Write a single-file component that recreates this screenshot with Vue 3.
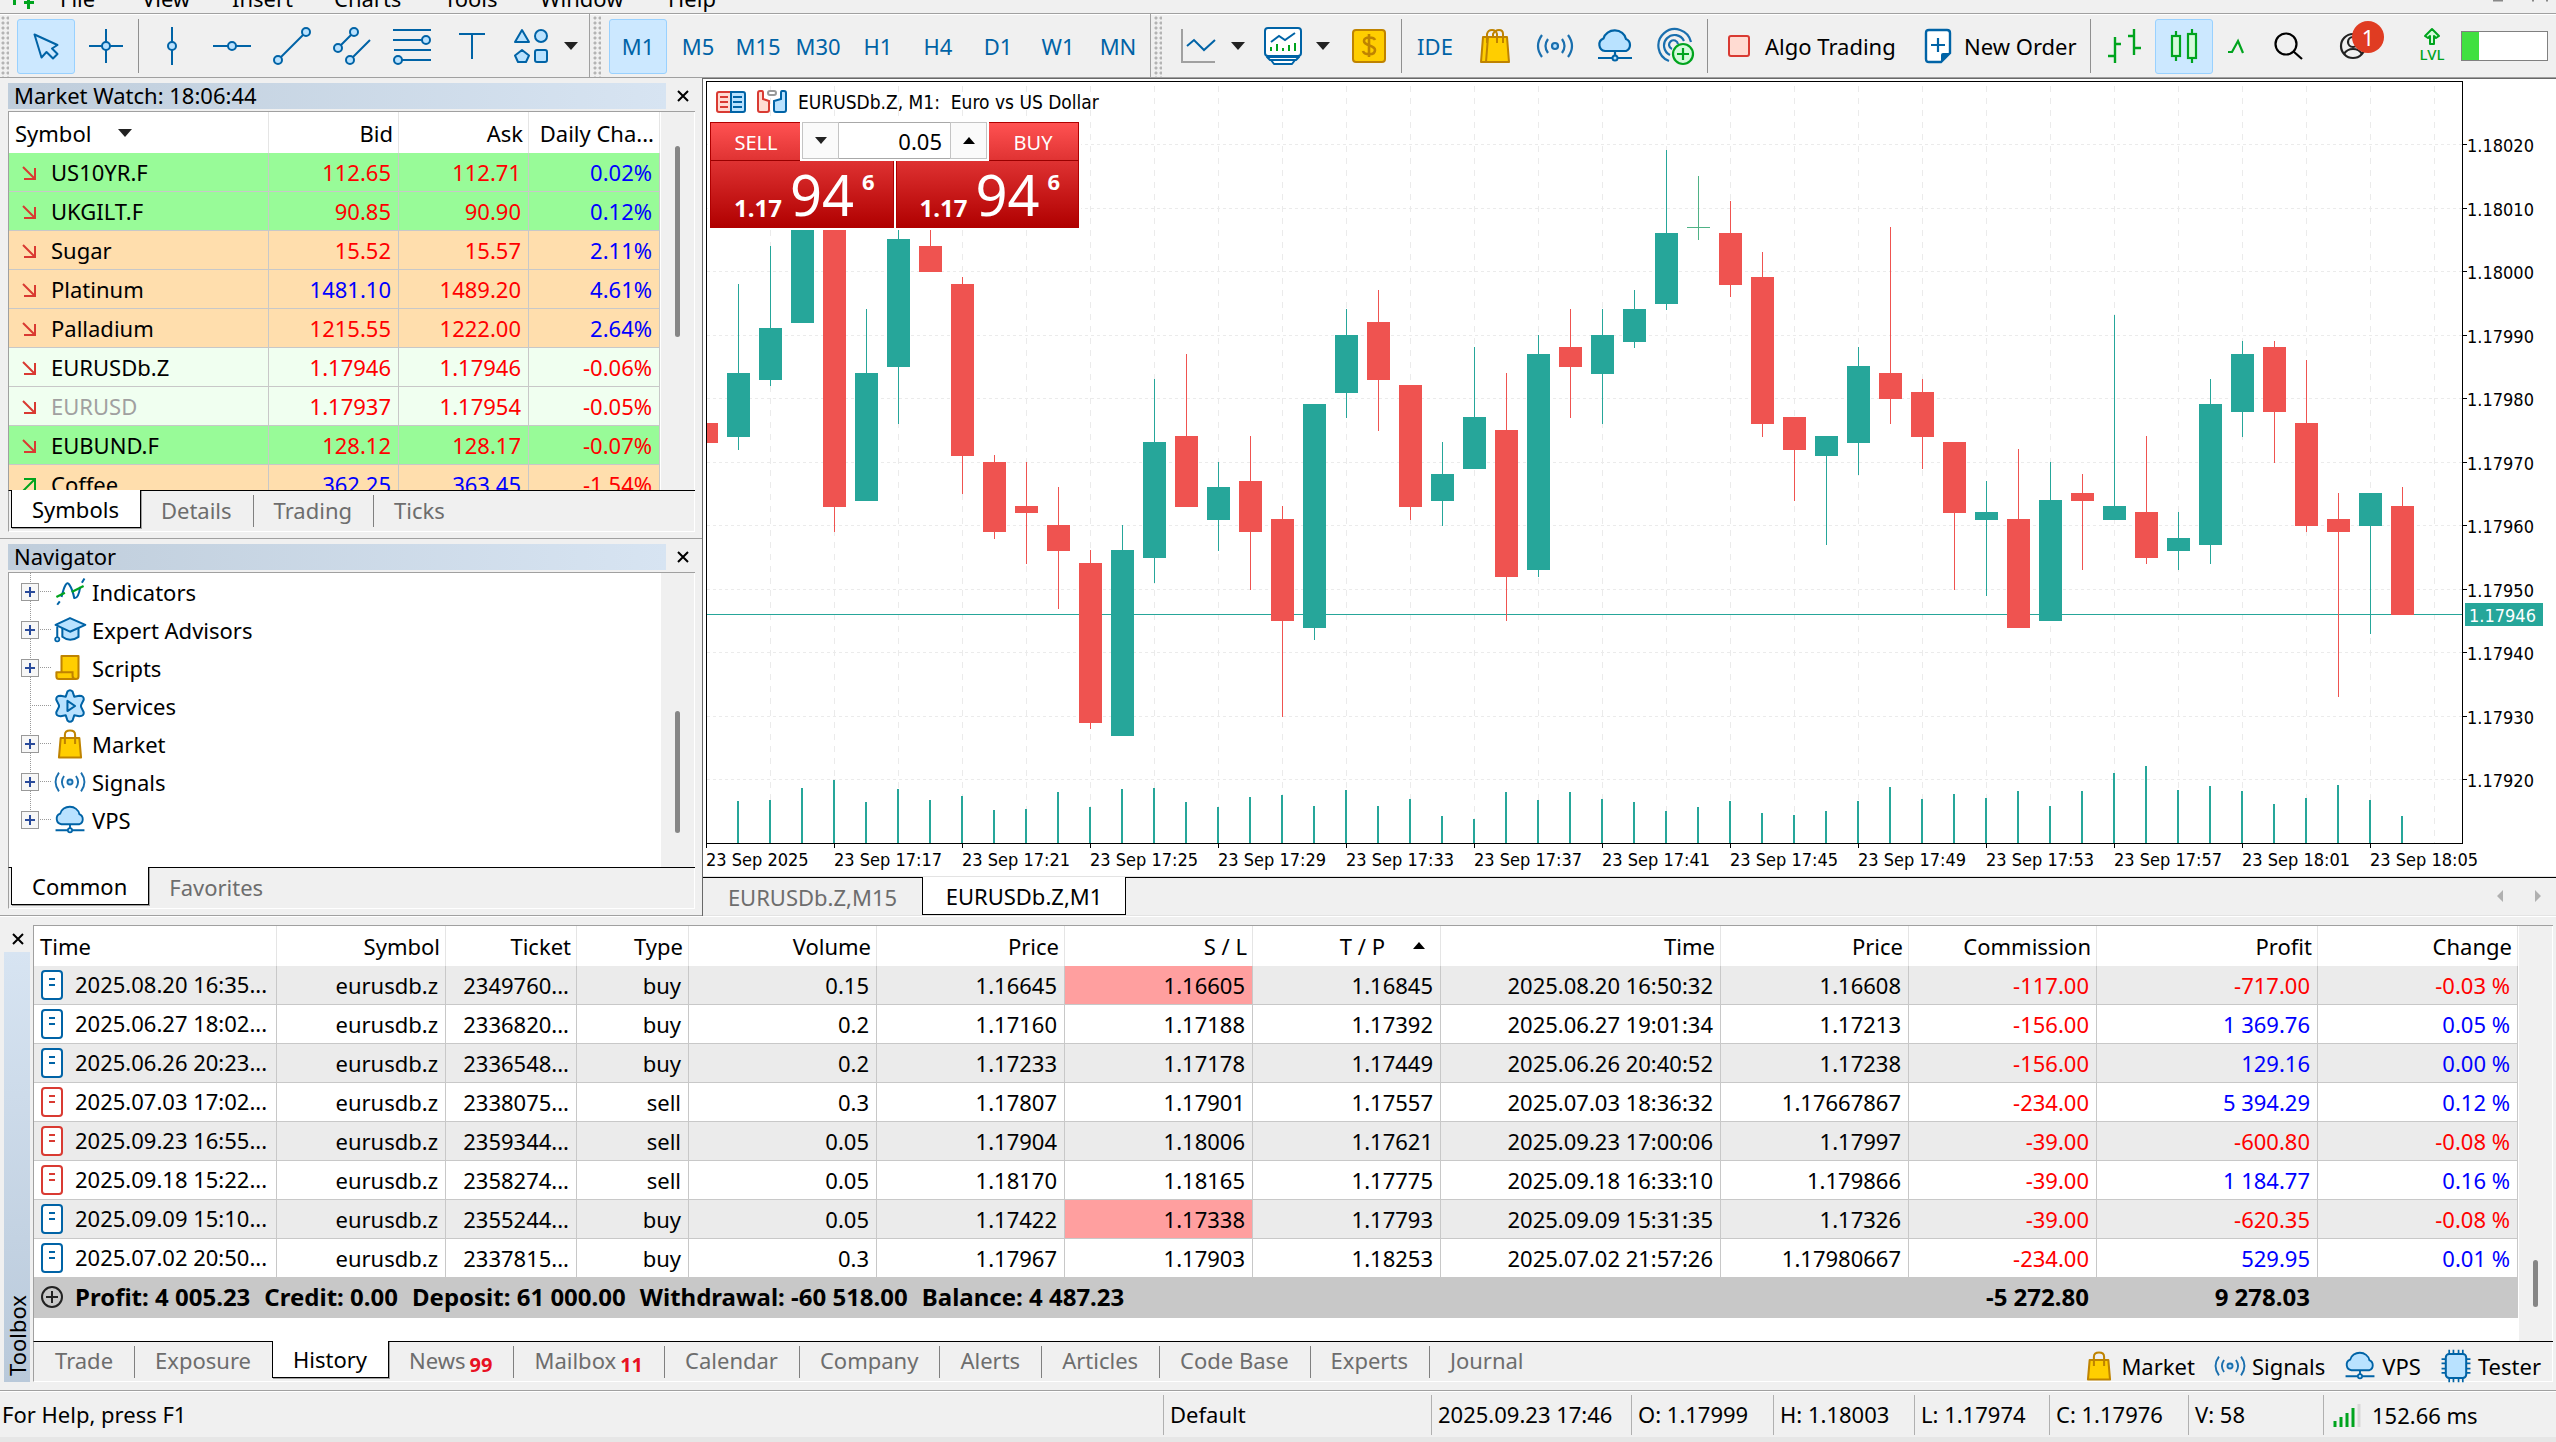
<script setup>
import { ref } from 'vue'

const menu = [
  { label: 'File', w: 82 }, { label: 'View', w: 90 }, { label: 'Insert', w: 102 },
  { label: 'Charts', w: 110 }, { label: 'Tools', w: 96 }, { label: 'Window', w: 128 }, { label: 'Help', w: 80 },
]
const tools = ['cursor', 'cross', '|', 'vline', 'hline', 'trend', 'channel', 'fibo', 'text']
const timeframes = ['M1', 'M5', 'M15', 'M30', 'H1', 'H4', 'D1', 'W1', 'MN']
const lots = ref('0.05')

const quotes = [
  { s: 'US10YR.F', bid: '112.65', ask: '112.71', ch: '0.02%', bg: 'green' },
  { s: 'UKGILT.F', bid: '90.85', ask: '90.90', ch: '0.12%', bg: 'green' },
  { s: 'Sugar', bid: '15.52', ask: '15.57', ch: '2.11%', bg: 'sand' },
  { s: 'Platinum', bid: '1481.10', ask: '1489.20', ch: '4.61%', bg: 'sand', bidUp: true },
  { s: 'Palladium', bid: '1215.55', ask: '1222.00', ch: '2.64%', bg: 'sand' },
  { s: 'EURUSDb.Z', bid: '1.17946', ask: '1.17946', ch: '-0.06%', bg: 'mint' },
  { s: 'EURUSD', bid: '1.17937', ask: '1.17954', ch: '-0.05%', bg: 'mint', dim: true },
  { s: 'EUBUND.F', bid: '128.12', ask: '128.17', ch: '-0.07%', bg: 'green' },
  { s: 'Coffee', bid: '362.25', ask: '363.45', ch: '-1.54%', bg: 'sand', up: true, bidUp: true, askUp: true },
]
const tree = [
  { label: 'Indicators', icon: 'indicators', open: true },
  { label: 'Expert Advisors', icon: 'hat', open: true },
  { label: 'Scripts', icon: 'scroll', open: true },
  { label: 'Services', icon: 'gear', open: false },
  { label: 'Market', icon: 'bag', open: true },
  { label: 'Signals', icon: 'signals', open: true },
  { label: 'VPS', icon: 'cloud', open: true },
]

/* open, close, high, low in points above 1.17900 */
const candles = [
  [76, 73, 76, 73], [74, 84, 98, 72], [83, 91, 104, 82], [92, 110, 112, 92], [110, 63, 111, 59], [64, 84, 94, 64],
  [85, 105, 108, 76], [104, 100, 108, 100], [98, 71, 99, 65], [70, 59, 71, 58], [63, 62, 70, 54], [60, 56, 66, 47],
  [54, 29, 56, 28], [27, 56, 60, 27], [55, 73, 83, 51], [74, 63, 87, 63], [61, 66, 70, 56], [67, 59, 74, 50],
  [61, 45, 63, 30], [44, 79, 79, 42], [81, 90, 94, 77], [92, 83, 97, 75], [82, 63, 82, 61], [64, 68, 73, 60],
  [69, 77, 88, 69], [75, 52, 84, 45], [53, 87, 90, 52], [88, 85, 94, 77], [84, 90, 94, 76], [89, 94, 97, 88],
  [95, 106, 119, 94], [107, 107, 115, 105], [106, 98, 111, 96], [99, 76, 103, 74], [77, 72, 77, 64], [71, 74, 74, 57],
  [73, 85, 88, 68], [84, 80, 107, 76], [81, 74, 83, 69], [73, 62, 73, 50], [61, 62, 67, 49], [61, 44, 72, 44],
  [45, 64, 70, 45], [65, 64, 68, 53], [61, 63, 93, 61], [62, 55, 74, 54], [56, 58, 62, 53], [57, 79, 83, 54],
  [78, 87, 89, 74], [88, 78, 89, 70], [76, 60, 86, 59], [61, 59, 65, 33], [60, 65, 65, 43], [63, 46, 66, 46],
]
const volumes = [0, 42, 43, 55, 63, 41, 54, 43, 47, 33, 34, 51, 36, 54, 55, 41, 36, 46, 48, 37, 53, 37, 44, 27, 24, 51, 43, 51,
  44, 41, 32, 36, 42, 30, 28, 32, 42, 56, 44, 49, 45, 52, 37, 52, 70, 77, 53, 57, 52, 39, 45, 58, 43, 27]

const STEP = 32
const BASE = 762
const PLOT_W = 1756
const py = (v) => Math.round(63 + (120 - v) * 6.35)
const bars = candles.map(([o, c, h, l], i) => ({
  x: i * STEP,
  top: py(Math.max(o, c)),
  height: o === c ? 1 : py(Math.min(o, c)) - py(Math.max(o, c)) + 1,
  high: py(h),
  low: py(l) + 1,
  color: o === c ? '#4fb286' : c > o ? '#26a69a' : '#ef5350',
}))
const gridX = Array.from({ length: 27 }, (_, i) => 64 + i * 64)
const prices = Array.from({ length: 11 }, (_, i) => ({ y: py(120 - i * 10), label: (1.1802 - i * 0.0001).toFixed(5) }))
const times = ['2025', '17:17', '17:21', '17:25', '17:29', '17:33', '17:37', '17:41', '17:45', '17:49', '17:53', '17:57', '18:01', '18:05']
  .map((t, i) => ({ x: i * 128, label: '23 Sep ' + t }))

const cols = [
  { t: 'Time', w: 243, left: true }, { t: 'Symbol', w: 169 }, { t: 'Ticket', w: 131 }, { t: 'Type', w: 112 },
  { t: 'Volume', w: 188 }, { t: 'Price', w: 188 }, { t: 'S / L', w: 188 }, { t: 'T / P', w: 188, sort: true },
  { t: 'Time', w: 280 }, { t: 'Price', w: 188 }, { t: 'Commission', w: 188 }, { t: 'Profit', w: 221 }, { t: 'Change', w: 200 },
]
const deals = [
  ['2025.08.20 16:35...', 'eurusdb.z', '2349760...', 'buy', '0.15', '1.16645', '1.16605', '1.16845', '2025.08.20 16:50:32', '1.16608', '-117.00', '-717.00', '-0.03 %'],
  ['2025.06.27 18:02...', 'eurusdb.z', '2336820...', 'buy', '0.2', '1.17160', '1.17188', '1.17392', '2025.06.27 19:01:34', '1.17213', '-156.00', '1 369.76', '0.05 %'],
  ['2025.06.26 20:23...', 'eurusdb.z', '2336548...', 'buy', '0.2', '1.17233', '1.17178', '1.17449', '2025.06.26 20:40:52', '1.17238', '-156.00', '129.16', '0.00 %'],
  ['2025.07.03 17:02...', 'eurusdb.z', '2338075...', 'sell', '0.3', '1.17807', '1.17901', '1.17557', '2025.07.03 18:36:32', '1.17667867', '-234.00', '5 394.29', '0.12 %'],
  ['2025.09.23 16:55...', 'eurusdb.z', '2359344...', 'sell', '0.05', '1.17904', '1.18006', '1.17621', '2025.09.23 17:00:06', '1.17997', '-39.00', '-600.80', '-0.08 %'],
  ['2025.09.18 15:22...', 'eurusdb.z', '2358274...', 'sell', '0.05', '1.18170', '1.18165', '1.17775', '2025.09.18 16:33:10', '1.179866', '-39.00', '1 184.77', '0.16 %'],
  ['2025.09.09 15:10...', 'eurusdb.z', '2355244...', 'buy', '0.05', '1.17422', '1.17338', '1.17793', '2025.09.09 15:31:35', '1.17326', '-39.00', '-620.35', '-0.08 %'],
  ['2025.07.02 20:50...', 'eurusdb.z', '2337815...', 'buy', '0.3', '1.17967', '1.17903', '1.18253', '2025.07.02 21:57:26', '1.17980667', '-234.00', '529.95', '0.01 %'],
]
const stopHit = (r, c) => c === 6 && (r === 0 || r === 6)
const tone = (v, c) => (c < 10 ? '' : v.startsWith('-') ? 'neg' : 'pos')
const totals = ['Profit: 4 005.23', 'Credit: 0.00', 'Deposit: 61 000.00', 'Withdrawal: -60 518.00', 'Balance: 4 487.23']
const boxTabs = [
  { t: 'Trade' }, { t: 'Exposure' }, { t: 'History', on: true }, { t: 'News', n: '99' }, { t: 'Mailbox', n: '11' }, { t: 'Calendar' },
  { t: 'Company' }, { t: 'Alerts' }, { t: 'Articles' }, { t: 'Code Base' }, { t: 'Experts' }, { t: 'Journal' },
]
const links = [{ t: 'Market', i: 'bag' }, { t: 'Signals', i: 'signals' }, { t: 'VPS', i: 'cloud' }, { t: 'Tester', i: 'chip' }]
const status = [
  { t: 'Default', w: 268 }, { t: '2025.09.23 17:46', w: 200 }, { t: 'O: 1.17999', w: 142 }, { t: 'H: 1.18003', w: 141 },
  { t: 'L: 1.17974', w: 135 }, { t: 'C: 1.17976', w: 139 }, { t: 'V: 58', w: 135 },
]
</script>

<template>
  <div class="terminal">
    <svg class="defs" aria-hidden="true">
      <defs>
        <symbol id="cursor" viewBox="0 0 40 40"><path d="M8.5 8.5 15.5 31.5 20.5 26 27 32.5 31.5 28 26 22.5 31.5 19Z" fill="#cce8ff" stroke="#0063a6" stroke-width="2" stroke-linejoin="round" /></symbol>
        <symbol id="cross" viewBox="0 0 40 40"><path d="M20 3V37M3 20H37" stroke="#0063a6" stroke-width="2" /><circle cx="20" cy="20" r="4" fill="#b9e2ff" stroke="#0063a6" stroke-width="2" /></symbol>
        <symbol id="vline" viewBox="0 0 40 40"><path d="M20 1V39" stroke="#0063a6" stroke-width="2" /><circle cx="20" cy="20" r="4" fill="#b9e2ff" stroke="#0063a6" stroke-width="2" /></symbol>
        <symbol id="hline" viewBox="0 0 40 40"><path d="M1 20H39" stroke="#0063a6" stroke-width="2" /><circle cx="20" cy="20" r="4" fill="#b9e2ff" stroke="#0063a6" stroke-width="2" /></symbol>
        <symbol id="trend" viewBox="0 0 40 40"><path d="M6 34 34 6" stroke="#0063a6" stroke-width="2" /><g fill="#b9e2ff" stroke="#0063a6" stroke-width="2"><circle cx="34" cy="6" r="4" /><circle cx="6" cy="34" r="4" /></g></symbol>
        <symbol id="channel" viewBox="0 0 40 40"><path d="M6 22 22 6M18 34 38 14" stroke="#0063a6" stroke-width="2" /><g fill="#b9e2ff" stroke="#0063a6" stroke-width="2"><circle cx="22" cy="6" r="4" /><circle cx="6" cy="22" r="4" /><circle cx="18" cy="34" r="4" /></g></symbol>
        <symbol id="fibo" viewBox="0 0 40 40"><path d="M1 4H39M1 14H32M2 24H39M8 34H39" stroke="#0063a6" stroke-width="2" /><g fill="#b9e2ff" stroke="#0063a6" stroke-width="2"><circle cx="34" cy="14" r="4" /><circle cx="6" cy="34" r="4" /></g></symbol>
        <symbol id="text" viewBox="0 0 40 40"><path d="M7 8H33M20 8V33" stroke="#0063a6" stroke-width="2" /></symbol>
        <symbol id="shapes" viewBox="0 0 40 40"><g fill="#b9e2ff" stroke="#0063a6" stroke-width="2" stroke-linejoin="round"><path d="M11 4 18 16H4Z" /><ellipse cx="30" cy="10" rx="6" ry="6" /><path d="M11 24 18 29.5 15 36H7L4 29.5Z" /><rect x="24" y="24" width="12" height="12" rx="2" /></g></symbol>
        <symbol id="linechart" viewBox="0 0 40 40"><path d="M4 3V36H37" fill="none" stroke="#a0a0a0" stroke-width="2" /><path d="M9 20 16 14 26 24 37 14" fill="none" stroke="#0063a6" stroke-width="2" /></symbol>
        <symbol id="template" viewBox="0 0 40 40"><rect x="2" y="2" width="36" height="28" rx="3" fill="#fff" stroke="#0063a6" stroke-width="2" /><path d="M4 31H36L33 34H7ZM8 34H32L29 38H11Z" fill="#fff" stroke="#0063a6" stroke-width="2" stroke-linejoin="round" /><path d="M8 16 16 10 22 14 32 7" fill="none" stroke="#0063a6" stroke-width="2" /><path d="M8 25V21M14 25V18M20 25V22M26 25V19M32 25V17" stroke="#00a41e" stroke-width="2" /></symbol>
        <symbol id="dollar" viewBox="0 0 40 40"><rect x="4" y="4" width="32" height="32" rx="3" fill="#ffce00" stroke="#bf8300" stroke-width="2" /><path d="M26 14C25 11 15 10 15 15 15 20 26 19 26 24 26 30 15 29 14 25M20 8V31" fill="none" stroke="#bf8300" stroke-width="2.6" /></symbol>
        <symbol id="bag2" viewBox="0 0 40 40"><path d="M8 11H32L34 36H6Z" fill="#ffce00" stroke="#bf8300" stroke-width="2" stroke-linejoin="round" /><path d="M13 11 11 36M12 17V8Q13 4 17 4T22 8V17M18 11V8Q20 4 24 4T28 8V17" fill="none" stroke="#bf8300" stroke-width="2" /></symbol>
        <symbol id="bag" viewBox="0 0 40 40"><path d="M9 13H31L33 36H7Z" fill="#ffce00" stroke="#bf8300" stroke-width="2.4" stroke-linejoin="round" /><path d="M14 20V9Q14 4 20 4T26 9V20" fill="none" stroke="#bf8300" stroke-width="2.4" /></symbol>
        <symbol id="signals" viewBox="0 0 40 40"><g fill="none" stroke="#1a6fae" stroke-width="2.2"><circle cx="20" cy="20" r="3" fill="#b9e2ff" /><path d="M13 13Q8 20 13 27M27 13Q32 20 27 27M7 9Q-1 20 7 31M33 9Q41 20 33 31" /></g></symbol>
        <symbol id="cloud" viewBox="0 0 40 40"><path d="M10 25A6.500 6.500 0 0 1 8.500 12.500 11.500 10.500 0 0 1 31 13 6.500 6.500 0 0 1 31 25Z" fill="#b9e2ff" stroke="#0063a6" stroke-width="2.2" /><path d="M20 26V30M3 32H37" stroke="#0063a6" stroke-width="2.2" /><circle cx="20" cy="32" r="2.5" fill="#b9e2ff" stroke="#0063a6" stroke-width="2" /></symbol>
        <symbol id="radar" viewBox="0 0 40 40"><g fill="none" stroke="#1a6fae" stroke-width="2.2"><path d="M14 35A16.500 16.500 0 1 1 36 16M15 29A10.500 10.500 0 1 1 29 15M17 23A4.500 4.500 0 1 1 23 18" /></g><circle cx="28" cy="28" r="10" fill="#d4fadb" stroke="#00a41e" stroke-width="2.2" /><path d="M28 22V34M22 28H34" stroke="#00a41e" stroke-width="2.2" /></symbol>
        <symbol id="order" viewBox="0 0 28 36"><path d="M5 2H23Q26 2 26 5V25L17 34H5Q2 34 2 31V5Q2 2 5 2Z" fill="#fff" stroke="#0063a6" stroke-width="2.4" /><path d="M17 34V27Q17 25 19 25H26Z" fill="#0063a6" /><path d="M14 10V24M7 17H21" stroke="#0063a6" stroke-width="2.2" /></symbol>
        <symbol id="barchart" viewBox="0 0 40 40"><path d="M11 11V37M4 30H11M11 18H17M30 3V29M24 10H30M30 22H37" fill="none" stroke="#00a41e" stroke-width="2.4" /></symbol>
        <symbol id="candlechart" viewBox="0 0 40 40"><path d="M12 5V35M28 3V37" stroke="#00a41e" stroke-width="2.2" /><g fill="#d4fadb" stroke="#00a41e" stroke-width="2.2"><rect x="8" y="10" width="8" height="20" /><rect x="24" y="8" width="8" height="24" /></g></symbol>
        <symbol id="peak" viewBox="0 0 20 40"><path d="M2 26H6L12 15 17 27" fill="none" stroke="#00a41e" stroke-width="2.2" /></symbol>
        <symbol id="search" viewBox="0 0 40 40"><circle cx="18" cy="18" r="10.5" fill="none" stroke="#000" stroke-width="2.2" /><path d="M25.5 25.5 34 33" stroke="#000" stroke-width="2.2" /></symbol>
        <symbol id="account" viewBox="0 0 40 40"><g fill="none" stroke="#222" stroke-width="2.2"><circle cx="20" cy="20" r="12" /><circle cx="20" cy="16" r="5" /><path d="M11 28Q14 23 20 23T29 28" /></g></symbol>
        <symbol id="lvlup" viewBox="0 0 20 20"><path d="M10 2 17 9 14 11 12 9V17H8V9L6 11 3 9Z" fill="#d4fadb" stroke="#00a41e" stroke-width="2" stroke-linejoin="round" /></symbol>
        <symbol id="indicators" viewBox="0 0 40 40"><path d="M5 35 8 31M10 26Q15 5 19 11T25 27Q30 28 32 14M34 9 37 4" fill="none" stroke="#0063a6" stroke-width="2.4" /><path d="M4 26 14 21M22 20 36 13" stroke="#00a41e" stroke-width="2.6" /></symbol>
        <symbol id="hat" viewBox="0 0 40 40"><path d="M11 16V28Q20 35 30 28V16" fill="#b9e2ff" stroke="#0063a6" stroke-width="2.4" /><path d="M20 6 38 14 20 22 3 14Z" fill="#b9e2ff" stroke="#0063a6" stroke-width="2.4" stroke-linejoin="round" /><path d="M5 16V29" stroke="#0063a6" stroke-width="2.4" /><circle cx="5" cy="31" r="2.5" fill="#b9e2ff" stroke="#0063a6" stroke-width="2" /></symbol>
        <symbol id="scroll" viewBox="0 0 40 40"><path d="M10 6H30V30Q30 33 27 33H7Q4 33 4 30V25H10Z" fill="#ffce00" stroke="#bf8300" stroke-width="2.4" stroke-linejoin="round" /><path d="M10 25H23V29Q23 33 27 33" fill="none" stroke="#bf8300" stroke-width="2.4" /></symbol>
        <symbol id="gear" viewBox="0 0 40 40"><path d="M17 3Q20 0 23 3L25 9 31 8Q37 8 36 13L33 19V21L36 27Q37 32 31 32L25 31 23 37Q20 40 17 37L15 31 9 32Q3 32 4 27L7 21V19L4 13Q3 8 9 8L15 9Z" fill="#b9e2ff" stroke="#0063a6" stroke-width="2.4" stroke-linejoin="round" /><path d="M17 14V26L26 20Z" fill="none" stroke="#0063a6" stroke-width="2.4" stroke-linejoin="round" /></symbol>
        <symbol id="chip" viewBox="0 0 40 40"><path d="M12 1V39M17 1V39M23 1V39M28 1V39M3 12H37M3 17H37M3 23H37M3 28H37" stroke="#0063a6" stroke-width="2" /><rect x="8" y="6" width="24" height="28" rx="4" fill="#b9e2ff" stroke="#0063a6" stroke-width="2.4" /></symbol>
      </defs>
    </svg>

    <nav class="menubar">
      <svg class="logo" width="40" height="13" viewBox="0 0 40 13"><path d="M14.5 0V5M28.5 0V9M24 2.500H34" stroke="#00a41e" stroke-width="3" /></svg>
      <button v-for="m in menu" :key="m.label" class="menu-item" :style="{ width: m.w + 'px' }">{{ m.label }}</button>
      <svg class="wincontrols" width="64" height="4" viewBox="0 0 64 4"><path d="M1 0H11M40 0H42M54 0H56" stroke="#888" stroke-width="3" /></svg>
    </nav>

    <header class="toolbar">
      <div class="group">
        <i class="grip"></i>
        <template v-for="(t, i) in tools" :key="i">
          <i v-if="t === '|'" class="sep"></i>
          <button v-else class="tb" :class="{ on: t === 'cursor' }" :aria-label="t"><svg class="ic"><use :href="'#' + t" /></svg></button>
        </template>
        <button class="tb drop" aria-label="shapes"><svg class="ic"><use href="#shapes" /></svg><i class="down"></i></button>
      </div>
      <div class="group">
        <i class="grip"></i>
        <button v-for="t in timeframes" :key="t" class="tb blue" :class="{ on: t === 'M1' }">{{ t }}</button>
      </div>
      <div class="group wide">
        <i class="grip"></i>
        <button class="tb drop" aria-label="chart type"><svg class="ic"><use href="#linechart" /></svg><i class="down"></i></button>
        <button class="tb drop" aria-label="templates"><svg class="ic"><use href="#template" /></svg><i class="down"></i></button>
        <button class="tb" aria-label="trading"><svg class="ic"><use href="#dollar" /></svg></button>
        <i class="sep"></i>
        <button class="tb blue">IDE</button>
        <button class="tb" aria-label="market"><svg class="ic"><use href="#bag2" /></svg></button>
        <button class="tb" aria-label="signals"><svg class="ic"><use href="#signals" /></svg></button>
        <button class="tb" aria-label="vps"><svg class="ic"><use href="#cloud" /></svg></button>
        <button class="tb" aria-label="add signal"><svg class="ic"><use href="#radar" /></svg></button>
        <i class="sep"></i>
        <button class="tb algo"><i class="stop"></i>Algo Trading</button>
        <button class="tb order"><svg width="28" height="36"><use href="#order" /></svg>New Order</button>
        <i class="sep"></i>
        <button class="tb" aria-label="bars"><svg class="ic"><use href="#barchart" /></svg></button>
        <button class="tb on" aria-label="candles"><svg class="ic"><use href="#candlechart" /></svg></button>
        <button class="tb slim" aria-label="line"><svg width="20" height="40"><use href="#peak" /></svg></button>
        <div class="right">
          <button class="tb" aria-label="search"><svg class="ic"><use href="#search" /></svg></button>
          <button class="tb account" aria-label="account"><svg class="ic"><use href="#account" /></svg><span class="badge">1</span></button>
          <div class="lvl"><svg width="20" height="20"><use href="#lvlup" /></svg><span>LVL</span></div>
          <div class="battery"><i></i></div>
        </div>
      </div>
    </header>

    <main class="middle">
      <aside class="left">
        <section class="dock watch">
          <div class="dock-title"><h2>Market Watch: 18:06:44</h2><button class="close" aria-label="close"><svg width="12" height="12"><path d="M1 1 11 11M11 1 1 11" stroke="#000" stroke-width="2" /></svg></button></div>
          <div class="dock-body">
            <table class="quotes">
              <thead><tr><th class="sym">Symbol<i class="down"></i></th><th>Bid</th><th>Ask</th><th class="chg">Daily Cha...</th></tr></thead>
              <tbody>
                <tr v-for="q in quotes" :key="q.s" :class="q.bg">
                  <td class="sym" :class="{ dim: q.dim }">
                    <svg class="arrow" width="16" height="16"><path v-if="q.up" d="M2 14 13 3M3 2H14V13" fill="none" stroke="#00a41e" stroke-width="2" /><path v-else d="M2 2 13 13M14 3V14H3" fill="none" stroke="#d93a32" stroke-width="2" /></svg>{{ q.s }}
                  </td>
                  <td :class="q.bidUp ? 'pos' : 'neg'">{{ q.bid }}</td>
                  <td :class="q.askUp ? 'pos' : 'neg'">{{ q.ask }}</td>
                  <td :class="q.ch.startsWith('-') ? 'neg' : 'pos'">{{ q.ch }}</td>
                </tr>
              </tbody>
            </table>
            <div class="track"><i class="thumb t1"></i></div>
          </div>
          <div class="tabs"><button class="on">Symbols</button><button>Details</button><button>Trading</button><button class="last">Ticks</button></div>
        </section>
        <section class="dock nav">
          <div class="dock-title"><h2>Navigator</h2><button class="close" aria-label="close"><svg width="12" height="12"><path d="M1 1 11 11M11 1 1 11" stroke="#000" stroke-width="2" /></svg></button></div>
          <div class="dock-body">
            <ul class="tree">
              <li v-for="n in tree" :key="n.label">
                <span class="node"><button v-if="n.open" class="plus" :aria-label="'expand ' + n.label"></button></span>
                <svg class="ni"><use :href="'#' + n.icon" /></svg>{{ n.label }}
              </li>
            </ul>
            <div class="track"><i class="thumb t2"></i></div>
          </div>
          <div class="tabs"><button class="on">Common</button><button class="last">Favorites</button></div>
        </section>
      </aside>

      <section class="chart">
        <div class="canvas">
          <svg class="plot" viewBox="0 0 1850 795" preserveAspectRatio="xMinYMin meet">
            <g stroke="#ebebeb" shape-rendering="crispEdges">
              <line v-for="x in gridX" :key="'x' + x" :x1="x + 0.5" :x2="x + 0.5" y1="5" :y2="BASE" stroke-dasharray="6 6" />
              <line v-for="p in prices" :key="'y' + p.y" x1="1" :x2="PLOT_W" :y1="p.y + 0.5" :y2="p.y + 0.5" stroke-dasharray="3 3" />
            </g>
            <rect x="0" :y="py(46)" :width="PLOT_W" height="1" fill="#26a69a" />
            <g shape-rendering="crispEdges">
              <template v-for="(b, i) in bars" :key="i">
                <rect v-if="i" :x="b.x" :y="b.high" width="1" :height="b.low - b.high" :fill="b.color" />
                <rect :x="i ? b.x - 11 : 1" :y="b.top" :width="i ? 23 : 11" :height="b.height" :fill="b.color" />
                <rect :x="b.x - 1" :y="BASE - volumes[i]" width="2" :height="volumes[i]" fill="#26a69a" />
              </template>
              <path :d="`M0 0.5H${PLOT_W}.5V${BASE}.5H0M0.5 0V${BASE + 5}`" fill="none" stroke="#000" />
              <rect v-for="p in prices" :key="'t' + p.y" :x="PLOT_W" :y="p.y" width="5" height="1" />
              <rect v-for="t in times" :key="'k' + t.x" :x="t.x" :y="BASE" width="1" height="5" />
            </g>
            <g class="axis">
              <text v-for="p in prices" :key="'p' + p.y" x="1761" :y="p.y + 8">{{ p.label }}</text>
              <text v-for="t in times" :key="'l' + t.x" :x="t.x" y="785">{{ t.label }}</text>
              <rect x="1759" y="522" width="78" height="23" fill="#26a69a" />
              <text x="1763" y="541" fill="#fff">1.17946</text>
            </g>
          </svg>
          <div class="caption">
            <svg width="30" height="24" viewBox="0 0 30 24"><path d="M15 2H3Q1 2 1 4V20Q1 22 3 22H15" fill="#ffdbd2" stroke="#d93a32" stroke-width="2" /><path d="M15 2H27Q29 2 29 4V20Q29 22 27 22H15Z" fill="#b9e2ff" stroke="#0063a6" stroke-width="2" /><path d="M4 7H12M4 12H12M4 17H12" stroke="#d93a32" stroke-width="2" /><path d="M17 7H26M17 12H26M17 17H26" stroke="#0063a6" stroke-width="2" /></svg>
            <svg width="30" height="24" viewBox="0 0 30 24"><path d="M1 3Q1 1 3 1H5Q6 1 6 3V9L12 11V20Q12 22 10 22H3Q1 22 1 20Z" fill="#ffdbd2" stroke="#d93a32" stroke-width="2" /><path d="M29 3Q29 1 27 1H25Q24 1 24 3V9L17 11V20Q17 22 19 22H27Q29 22 29 20Z" fill="#b9e2ff" stroke="#0063a6" stroke-width="2" /><rect x="11" y="1" width="8" height="4" rx="2" fill="#fff" stroke="#999" stroke-width="2" /></svg>
            <span>EURUSDb.Z, M1:&nbsp; Euro vs US Dollar</span>
          </div>
          <div class="oneclick">
            <button class="deal sell"><span class="side">SELL</span><span class="quote"><b>1.17</b><em>94</em><b class="sup">6</b></span></button>
            <button class="deal buy"><span class="side">BUY</span><span class="quote"><b>1.17</b><em>94</em><b class="sup">6</b></span></button>
            <div class="spin"><button aria-label="less"><i class="down"></i></button><input v-model="lots" aria-label="Volume" /><button aria-label="more"><i class="upt"></i></button></div>
          </div>
        </div>
        <div class="chart-tabs"><button>EURUSDb.Z,M15</button><button class="on">EURUSDb.Z,M1</button>
          <svg class="pager" width="46" height="12"><path d="M7 0V12L1 6ZM39 0V12L45 6Z" fill="#b0b0b0" /></svg>
        </div>
      </section>
    </main>

    <section class="toolbox">
      <div class="strip"><button class="close" aria-label="close toolbox"><svg width="12" height="12"><path d="M1 1 11 11M11 1 1 11" stroke="#000" stroke-width="2" /></svg></button><div class="vtitle"><span>Toolbox</span></div></div>
      <div class="box">
        <div class="box-body">
          <table class="deals">
            <colgroup><col v-for="(c, i) in cols" :key="i" :style="{ width: c.w / 24.84 + '%' }" /></colgroup>
            <thead><tr><th v-for="(c, i) in cols" :key="i" :class="{ l: c.left, sorted: c.sort }">{{ c.t }}<i v-if="c.sort" class="upt"></i></th></tr></thead>
            <tbody>
              <tr v-for="(d, r) in deals" :key="r">
                <td v-for="(v, c) in d" :key="c" :class="[tone(v, c), { l: c === 0, hit: stopHit(r, c) }]">
                  <svg v-if="c === 0" class="doc" width="22" height="30" viewBox="0 0 22 30"><g :stroke="d[3] === 'buy' ? '#0063a6' : '#d93a32'" stroke-width="2"><rect x="1" y="1" width="20" height="28" rx="3" fill="#fff" /><path d="M8 9H14M8 15H14" /></g></svg>{{ v }}
                </td>
              </tr>
            </tbody>
            <tfoot><tr>
              <td colspan="10" class="l"><div class="sum"><svg width="24" height="24"><circle cx="12" cy="12" r="10" fill="none" stroke="#222" stroke-width="2" /><path d="M12 6V18M6 12H18" stroke="#222" stroke-width="2" /></svg><span v-for="t in totals" :key="t">{{ t }}</span></div></td>
              <td>-5 272.80</td><td>9 278.03</td><td></td>
            </tr></tfoot>
          </table>
          <div class="track"><i class="thumb t3"></i></div>
        </div>
        <div class="tabs big">
          <button v-for="t in boxTabs" :key="t.t" :class="{ on: t.on, last: t.t === 'Journal' || t.t === 'Exposure' }">{{ t.t }}<b v-if="t.n">{{ t.n }}</b></button>
          <div class="links"><a v-for="l in links" :key="l.t" href="#"><svg class="li"><use :href="'#' + l.i" /></svg>{{ l.t }}</a></div>
        </div>
      </div>
    </section>

    <footer class="status">
      <span class="help">For Help, press F1</span>
      <span v-for="s in status" :key="s.t" class="cell" :style="{ width: s.w + 'px' }">{{ s.t }}</span>
      <span class="cell ping"><svg width="28" height="24"><path d="M2 24V18M8 24V14M14 24V10M20 24V5" stroke="#00a41e" stroke-width="3" /><path d="M26 24V1" stroke="#d8d8d8" stroke-width="3" /></svg>152.66 ms</span>
    </footer>
  </div>
</template>

<style>
body { margin: 0; background: #f0f0f0; }
</style>

<style scoped>
* { box-sizing: border-box; }
.terminal { min-height: 100vh; display: flex; flex-direction: column; overflow: hidden; background: #f0f0f0; color: #000; font: 22px/28px "Noto Sans", "Open Sans", sans-serif; }
button { font: inherit; color: inherit; background: none; border: 0; padding: 0; margin: 0; }
i { font-style: normal; display: block; flex: none; }
svg { flex: none; display: block; }
.defs { position: absolute; width: 0; height: 0; }
.neg { color: #f00; }
.pos { color: #00f; }
.down { width: 0; height: 0; border: 7px solid transparent; border-top: 8px solid #222; border-bottom: 0; }
.upt { width: 0; height: 0; border: 6px solid transparent; border-bottom: 7px solid #000; border-top: 0; }

.menubar { height: 13px; display: flex; align-items: flex-end; overflow: hidden; }
.logo { margin-right: 20px; align-self: flex-start; }
.menu-item { text-align: left; height: 31px; line-height: 28px; white-space: nowrap; }
.wincontrols { margin-left: auto; align-self: flex-start; }

.toolbar { height: 65px; display: flex; border-top: 1px solid #a0a0a0; border-bottom: 1px solid #a0a0a0; box-shadow: inset 0 1px #fff; }
.group { display: flex; align-items: center; gap: 2px; padding: 1px 3px 0 1px; border-right: 1px solid #a0a0a0; }
.group + .group { padding-left: 3px; }
.wide { flex: 1; border-right: 0; padding-right: 8px; }
.grip { width: 8px; margin-right: 6px; height: 61px; background: radial-gradient(circle at 2px 2px, #b4b4b4 1px, transparent 2px) 0 0 / 5px 5px; }
.tb { width: 58px; height: 55px; flex: none; display: flex; align-items: center; justify-content: center; border: 1px solid transparent; border-radius: 3px; white-space: nowrap; }
.tb.on { background: #cce8ff; border-color: #99d1ff; }
.tb.drop { width: 83px; justify-content: flex-start; padding-left: 7px; gap: 13px; }
.blue { color: #0063a6; }
.ic { width: 40px; height: 40px; }
.sep { width: 4px; height: 54px; background: linear-gradient(90deg, transparent 1px, #909090 1px 2px, transparent 2px); }
.algo { width: 195px; justify-content: flex-start; padding-left: 15px; gap: 15px; }
.stop { width: 22px; height: 22px; border: 2px solid #d93a32; border-radius: 3px; background: #ffdbd2; }
.order { width: 178px; justify-content: flex-start; padding-left: 14px; gap: 12px; }
.slim { width: 42px; }
.right { margin-left: auto; display: flex; align-items: center; }
.account { position: relative; margin: 0 35px 0 7px; }
.badge { position: absolute; left: 27px; top: 1px; width: 32px; height: 32px; border-radius: 16px; background: #e03c22; color: #fff; line-height: 32px; text-align: center; }
.lvl { width: 30px; margin-right: 14px; padding-bottom: 4px; display: flex; flex-direction: column; align-items: center; color: #00a41e; font-size: 15px; font-weight: 500; line-height: 14px; }
.battery { width: 87px; height: 30px; border: 1px solid #808080; background: #fff; }
.battery i { width: 17px; height: 28px; background: #40e040; }

.middle { flex: 1; display: flex; min-height: 0; }
.left { width: 702px; flex: none; display: flex; flex-direction: column; }
.dock { display: flex; flex-direction: column; padding: 5px 7px 6px 8px; border-bottom: 1px solid #a0a0a0; }
.watch { height: 461px; flex: none; }
.nav { flex: 1; }
.dock-title { display: flex; align-items: center; height: 26px; margin-bottom: 2px; flex: none; }
h2 { margin: 0; flex: 1; height: 26px; font: inherit; line-height: 24px; padding-left: 6px; background: linear-gradient(90deg, #bfcddb, #d7e4f2); }
.close { width: 29px; display: flex; justify-content: center; padding-left: 5px; }
.dock-body { flex: 1; min-height: 0; overflow: hidden; display: flex; background: #fff; border-top: 1px solid #a0a0a0; border-left: 1px solid #a0a0a0; border-bottom: 1px solid #000; }
.track { width: 35px; flex: none; background: #f0f0f0; position: relative; border-left: 1px solid #fff; border-right: 1px solid #fff; }
.thumb { width: 5px; border-radius: 3px; background: #868686; margin-left: 14px; }
.t1 { height: 191px; margin-top: 34px; }
.t2 { height: 122px; margin-top: 138px; }
table { border-collapse: separate; border-spacing: 0; table-layout: fixed; }
th, td { font-weight: 400; text-align: right; padding: 0; white-space: nowrap; overflow: hidden; }
.quotes { flex: 1; width: 100%; align-self: flex-start; }
.quotes th { height: 41px; padding-right: 5px; border-right: 1px solid #e5e5e5; width: 130px; }
.quotes td { height: 39px; padding-right: 7px; border-right: 1px solid #c8c8c8; border-bottom: 1px solid #c8c8c8; }
.quotes th.sym { width: auto; padding-left: 6px; text-align: left; }
.quotes th.sym .down { display: inline-block; margin: 0 0 5px 27px; }
.quotes th.chg { width: 131px; padding-right: 5px; }
.quotes td.sym { text-align: left; padding-left: 12px; }
.arrow { display: inline-block; margin-right: 14px; }
.dim { color: #a0a0a0; }
.green td { background: #98fb98; }
.sand td { background: #ffdead; }
.mint td { background: #f0fff0; }

.tabs { display: flex; flex: none; height: 41px; padding-left: 2px; position: relative; color: #6d6d6d; border-left: 1px solid #a0a0a0; border-bottom: 1px solid #fff; border-right: 1px solid #fff; }
.tabs button { position: relative; padding: 0 21px 2px 20px; height: 32px; margin-top: 4px; border-right: 1px solid #808080; white-space: nowrap; }
.tabs button.last { border-right: 0; }
.tabs button.on { margin: -1px 0 0; padding-bottom: 0; height: 38px; background: #fff; color: #000; border: 1px solid #000; border-top: 0; box-shadow: 1px 1px #a0a0a0; }
.tree { flex: 1; margin: 0; padding: 0; list-style: none; position: relative; }
.tree li { height: 38px; display: flex; align-items: center; }
.node { width: 44px; height: 38px; display: flex; align-items: center; padding-left: 12px; background: repeating-linear-gradient(90deg, #999 0 1px, transparent 1px 2px) 21px 18px / 21px 1px no-repeat, repeating-linear-gradient(#999 0 1px, transparent 1px 2px) 21px 0 / 1px 38px no-repeat; }
.tree li:last-child .node { background-size: 21px 1px, 1px 19px; }
.plus { width: 18px; height: 18px; border: 1px solid #999; background: linear-gradient(#2a4b9b, #2a4b9b) center / 10px 2px no-repeat, linear-gradient(#2a4b9b, #2a4b9b) center / 2px 10px no-repeat, #f7f7f7; }
.ni { width: 34px; height: 34px; margin-right: 5px; }

.chart { flex: 1; min-width: 0; display: flex; flex-direction: column; border-left: 1px solid #696969; }
.canvas { height: 799px; position: relative; background: #fff; border-top: 1px solid #696969; border-bottom: 1px solid #e3e3e3; padding: 2px 0 0 3px; }
.plot { width: 100%; height: 795px; }
.axis { font: 18px "DejaVu Sans Condensed", "DejaVu Sans", sans-serif; }
.caption { position: absolute; left: 13px; top: 11px; display: flex; align-items: center; gap: 11px; font: 19px/24px "DejaVu Sans Condensed", "DejaVu Sans", sans-serif; white-space: pre; }
.oneclick { position: absolute; left: 5px; top: 41px; width: 373px; height: 110px; padding: 2px; display: flex; gap: 2px; background: #fff; color: #fff; }
.deal { flex: 1; display: flex; flex-direction: column; background: linear-gradient(#ff5252, #dc2f2f 40%, #b00000); border: 1px solid #b00000; }
.side { width: 90px; height: 38px; line-height: 40px; font-size: 20px; border-bottom: 1px solid #900; }
.buy .side { align-self: flex-end; }
.quote { display: flex; align-self: stretch; padding-left: 23px; height: 66px; gap: 8px; }
.quote b { align-self: flex-end; font-size: 24px; line-height: 38px; }
.quote em { font-style: normal; font-size: 56px; line-height: 66px; }
.quote b.sup { align-self: flex-start; font-size: 22px; line-height: 40px; }
.spin { position: absolute; left: 92px; top: 2px; width: 189px; height: 39px; padding: 0 2px 2px; background: #fff; display: flex; }
.spin button { width: 37px; display: flex; align-items: center; justify-content: center; border: 1px solid #c4c4c4; background: #fafafa; }
.spin .down { border-width: 7px 6px 0; }
.spin input { flex: 1; min-width: 0; border: 1px solid #a8a8a8; border-width: 1px 0; font: inherit; text-align: right; padding: 0 8px; background: #fff; color: #000; }
.chart-tabs { flex: 1; display: flex; border-top: 1px solid #000; border-bottom: 1px solid #e3e3e3; color: #6d6d6d; }
.chart-tabs button { width: 219px; height: 37px; }
.chart-tabs button.on { width: 204px; margin-top: -1px; height: 38px; background: #fff; color: #000; border: 1px solid #000; border-top: 0; }
.pager { margin: 12px 14px 0 auto; }

.toolbox { display: flex; padding: 8px 3px; border-bottom: 1px solid #a0a0a0; border-top: 1px solid #fff; padding-left: 0; }
.strip { width: 33px; flex: none; display: flex; flex-direction: column; }
.strip .close { height: 27px; align-items: center; padding-left: 6px; }
.vtitle { flex: 1; width: 26px; margin-left: 4px; background: linear-gradient(#d7e4f2, #b9c9da); display: flex; align-items: flex-end; justify-content: center; padding-bottom: 6px; }
.vtitle span { writing-mode: vertical-rl; transform: rotate(180deg); line-height: 26px; }
.box { flex: 1; min-width: 0; }
.box-body { display: flex; background: #fff; height: 417px; border: 1px solid #a0a0a0; border-right: 0; border-bottom-color: #000; }
.deals { flex: 1; width: 100%; align-self: flex-start; }
.deals th { height: 40px; padding: 0 5px 0 6px; border-right: 1px solid #e5e5e5; }
.deals td { height: 39px; padding: 0 7px; border-right: 1px solid #c8c8c8; border-bottom: 1px solid #c8c8c8; }
.deals .l { text-align: left; }
.deals th.sorted { padding-right: 15px; }
.deals th .upt { display: inline-block; margin: 0 0 6px 28px; }
.deals tbody tr:nth-child(odd) td { background: #ebebeb; }
.deals tbody tr td.hit { background: #ff9f9f; }
.doc { display: inline-block; vertical-align: middle; margin: -3px 12px 0 0; }
.deals tfoot td { height: 40px; padding-bottom: 2px; font-weight: 700; font-size: 24px; background: #c8c8c8; border-color: #c8c8c8; }
.sum { display: flex; align-items: center; gap: 14px; }
.sum svg { margin: 0 -3px 0 -1px; }
.t3 { height: 47px; margin: 334px 0 0 14px; }
.tabs.big { height: 40px; padding-left: 1px; }
.tabs.big button { padding-bottom: 4px; }
.tabs.big button.on { height: 37px; padding-bottom: 0; }
.tabs b { color: #e81123; font-size: 20px; margin-left: 4px; position: relative; top: 3px; }
.links { margin: 8px 11px 0 auto; display: flex; gap: 18px; }
.links a { display: flex; align-items: center; gap: 5px; height: 32px; color: #000; text-decoration: none; }
.li { width: 34px; height: 34px; }

.status { height: 54px; display: flex; align-items: stretch; border-top: 1px solid #fff; border-bottom: 8px solid #e6e6e6; }
.status span { line-height: 44px; white-space: nowrap; }
.help { flex: 1; padding-left: 2px; }
.cell { padding-left: 6px; margin: 3px 0; border-left: 1px solid #b0b0b0; height: 40px; }
.status span.cell { line-height: 38px; }
.ping { width: 233px; display: flex; align-items: center; gap: 11px; padding-left: 9px; }
</style>
